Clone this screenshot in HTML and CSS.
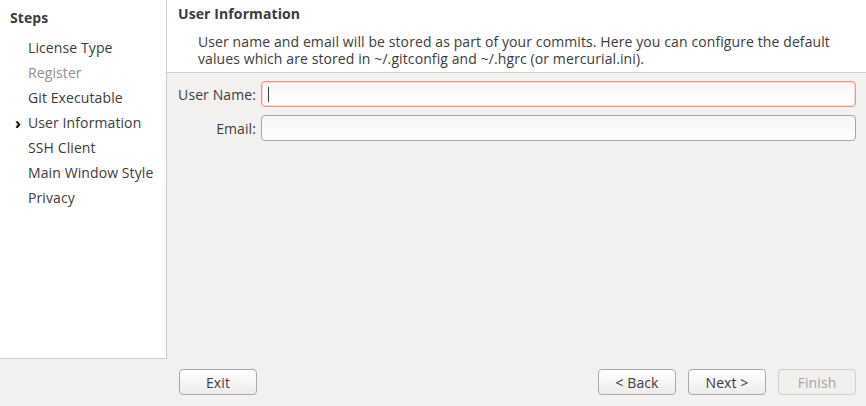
FILE: index.html
```html
<!DOCTYPE html>
<html>
<head>
<meta charset="utf-8">
<link rel="stylesheet" href="styles.css">
</head>
<body>
<div class="window">
  <aside class="steps">
    <div class="steps-title">Steps</div>
    <ul class="step-list">
      <li class="step">License Type</li>
      <li class="step disabled">Register</li>
      <li class="step">Git Executable</li>
      <li class="step current"><span class="marker">›</span>User Information</li>
      <li class="step">SSH Client</li>
      <li class="step">Main Window Style</li>
      <li class="step">Privacy</li>
    </ul>
  </aside>
  <main class="content">
    <header class="page-header">
      <div class="page-title">User Information</div>
      <p class="page-desc">User name and email will be stored as part of your commits. Here you can configure the default values which are stored in ~/.gitconfig and ~/.hgrc (or mercurial.ini).</p>
    </header>
    <section class="form">
      <label class="label">User Name:</label>
      <div class="input focused"><span class="caret"></span></div>
      <label class="label">Email:</label>
      <div class="input"></div>
    </section>
    <footer class="buttons">
      <button class="btn">Exit</button>
      <div class="spacer"></div>
      <button class="btn">&lt; Back</button>
      <button class="btn">Next &gt;</button>
      <button class="btn" disabled>Finish</button>
    </footer>
  </main>
</div>
</body>
</html>
```

FILE: styles.css
```css
* { box-sizing: border-box; }
html, body {
  margin: 0;
  padding: 0;
  width: 866px;
  height: 406px;
  overflow: hidden;
  background: #f2f1f0;
  font-family: "Open Sans", "DejaVu Sans", sans-serif;
  font-size: 14px;
  letter-spacing: 0.1px;
  color: #3c3c3c;
}
.window {
  display: grid;
  grid-template-columns: 167px 1fr;
  height: 406px;
}
.steps {
  background: #ffffff;
  border-right: 1px solid #cfcdca;
  border-bottom: 1px solid #cfcdca;
  height: 359px;
  padding: 8px 0 0 10px;
}
.steps-title {
  font-weight: bold;
  line-height: 20px;
  height: 20px;
}
.step-list {
  list-style: none;
  margin: 7px 0 0 0;
  padding: 0;
}
.step {
  height: 25px;
  line-height: 25px;
  padding-left: 18px;
  position: relative;
  white-space: nowrap;
}
.step.disabled { color: #8f8f8f; }
.marker {
  position: absolute;
  left: 5px;
  top: 1px;
  font-weight: bold;
  font-size: 16px;
  color: #000;
}
.content {
  display: flex;
  flex-direction: column;
  min-width: 0;
}
.page-header {
  background: #ffffff;
  height: 73px;
  border-bottom: 1px solid #d6d4d1;
  padding: 5px 10px 0 11px;
}
.page-title {
  font-weight: bold;
  line-height: 18px;
}
.page-desc {
  margin: 10px 0 0 20px;
  max-width: 640px;
  line-height: 17px;
}
.form {
  display: grid;
  grid-template-columns: 78px 1fr;
  column-gap: 5px;
  row-gap: 8px;
  padding: 8px 10px 0 11px;
  align-items: center;
}
.label {
  text-align: right;
  white-space: nowrap;
}
.input {
  height: 26px;
  border: 1px solid #a6a6a6;
  border-radius: 4px;
  background: linear-gradient(#f6f6f6, #ffffff);
  position: relative;
}
.input.focused {
  border-color: #e59b7e;
  box-shadow: inset 0 0 0 1px #f7dccf;
}
.caret {
  position: absolute;
  left: 6px;
  top: 5px;
  width: 1px;
  height: 15px;
  background: #3c3c3c;
}
.buttons {
  margin-top: auto;
  display: flex;
  gap: 12px;
  padding: 0 10px 11px 12px;
}
.spacer { flex: 1; }
.btn {
  width: 78px;
  height: 26px;
  font-family: inherit;
  font-size: 14px;
  letter-spacing: 0.1px;
  color: #3c3c3c;
  border: 1px solid #a9a9a9;
  border-radius: 4px;
  background: linear-gradient(#ffffff, #ececec);
  padding: 0;
}
.btn:disabled {
  color: #a5a5a5;
  border-color: #d0cecb;
  background: #f1f0ef;
}
```
